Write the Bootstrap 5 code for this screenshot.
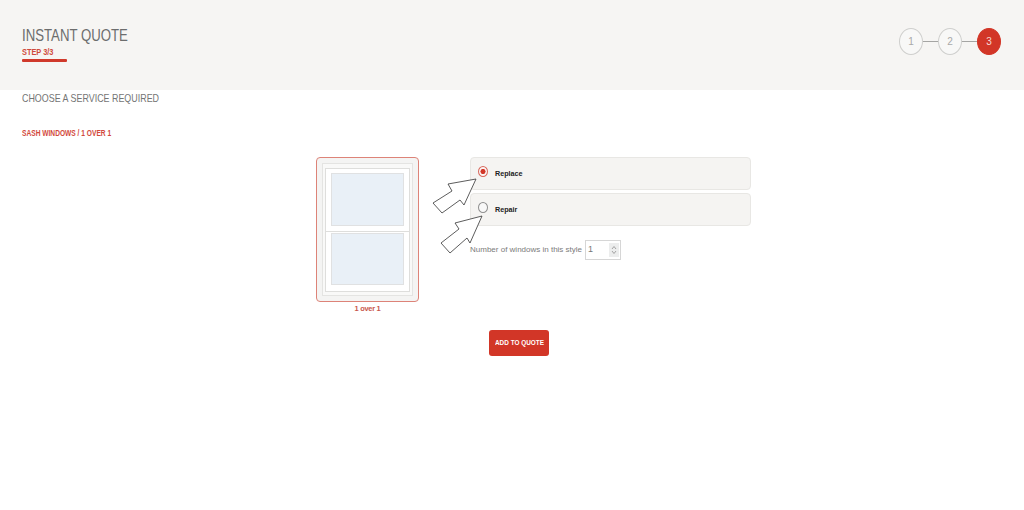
<!DOCTYPE html>
<html lang="en">
<head>
<meta charset="utf-8">
<title>Instant Quote</title>
<link href="https://cdn.jsdelivr.net/npm/bootstrap@5.3.0/dist/css/bootstrap.min.css" rel="stylesheet">
<style>
body{font-family:"Liberation Sans",Arial,sans-serif;background:#fff;color:#6d6e6e;overflow:hidden}
.quote-head{height:90px;background:#f6f5f3;padding:25px 23px 0 22px}
.squeeze{transform-origin:left center;white-space:nowrap}
.quote-title{font-size:16.5px;line-height:20px;margin:0;font-weight:400;color:#6c6d6d;transform:scaleX(.8)}
.quote-step{font-size:9px;line-height:10px;margin-top:2px;font-weight:700;color:#cf4a3c;transform:scaleX(.82)}
.quote-rule{width:45px;height:3px;background:#d0392b;margin-top:2px;border-radius:1px}
.stepper{margin-top:3px}
.step-dot{width:24px;height:27px;border-radius:50%;border:1px solid #cfcfcd;background:#f8f8f7;color:#a9a9a9;font-size:10px}
.step-dot.is-on{background:#d23627;border-color:#d23627;color:#f6d9d4}
.step-link{width:15px;height:1px;background:#a5a5a3}
.service-title{font-size:11.5px;line-height:14px;margin:1px 0 0 22px;font-weight:400;color:#747575;transform:scaleX(.775)}
.crumb{font-size:8.5px;line-height:10px;margin:23px 0 0 22px;font-weight:700;color:#d2493b;transform:scaleX(.78)}
.picker{margin:19px 0 0 316px;position:relative}
.window-col{width:103px}
.window-card{height:145px;border:1px solid #dd8378;border-radius:4px;background:#f4f4f3;padding:5px}
.window-frame{height:133px;border:1px solid #e4e4e2;background:#f9f9f8;padding:4px 2px 3px}
.sash{background:#fff;border:1px solid #dededc;padding:4px 5px 5px;height:64px}
.sash-lower{border-top:0;height:60px;padding:1px 5px 6px}
.glass{height:100%;background:#e9f0f7;border:1px solid #e0e1e2}
.window-cap{font-size:7.5px;line-height:10px;margin-top:2px;font-weight:700;color:#c9584c;text-align:center;letter-spacing:-.3px}
.options-col{width:281px;margin-left:51px}
.opt-row{height:33px;background:#f5f4f2;border:1px solid #e8e7e4;border-radius:4px;margin-bottom:3px;padding:0 0 0 7px}
.opt-radio{width:10px;height:11px;margin:-5px 0 0;border:1px solid #8f8f8f;background:#f8f8f8;appearance:none;border-radius:50%;flex:none}
.opt-radio:checked{border-color:#d8695d;background:radial-gradient(circle,#d23627 0 2.3px,#fbf3f2 2.8px)}
.opt-label{font-size:7.2px;font-weight:700;color:#222;margin:1px 0 0 7px}
.count-row{margin-top:14px;font-size:8px;color:#7b7b7b}
.count-box{width:36px;height:20px;border:1px solid #d6d6d6;margin-left:3px;padding:0 1px 0 2px;color:#777;background:#fff}
.count-num{font-size:9px}
.spin{width:10px;height:14px;background:#eceded;color:#999}
.add-btn{margin:16px 0 0 489px;width:60px;height:26px;padding:0;background:#d23627;border:0;border-radius:3px;color:#fff;display:block}
.add-text{display:block;font-size:8px;font-weight:700;white-space:nowrap;transform:scaleX(.8)}
.arrows{position:absolute;left:109px;top:13px;width:60px;height:90px;pointer-events:none}
</style>
</head>
<body>
<header class="quote-head d-flex justify-content-between align-items-start">
  <div>
    <h1 class="quote-title squeeze">INSTANT QUOTE</h1>
    <div class="quote-step squeeze">STEP 3/3</div>
    <div class="quote-rule"></div>
  </div>
  <div class="stepper d-flex align-items-center">
    <div class="step-dot d-flex align-items-center justify-content-center">1</div>
    <div class="step-link"></div>
    <div class="step-dot d-flex align-items-center justify-content-center">2</div>
    <div class="step-link"></div>
    <div class="step-dot is-on d-flex align-items-center justify-content-center">3</div>
  </div>
</header>
<main>
  <h2 class="service-title squeeze">CHOOSE A SERVICE REQUIRED</h2>
  <div class="crumb squeeze">SASH WINDOWS / 1 OVER 1</div>
  <div class="picker d-flex align-items-start">
    <div class="window-col">
      <div class="window-card">
        <div class="window-frame">
          <div class="sash"><div class="glass"></div></div>
          <div class="sash sash-lower"><div class="glass"></div></div>
        </div>
      </div>
      <div class="window-cap">1 over 1</div>
    </div>
    <div class="options-col">
      <div class="opt-row d-flex align-items-center">
        <input class="opt-radio" type="radio" name="svc" id="svc1" checked>
        <label class="opt-label" for="svc1">Replace</label>
      </div>
      <div class="opt-row d-flex align-items-center">
        <input class="opt-radio" type="radio" name="svc" id="svc2">
        <label class="opt-label" for="svc2">Repair</label>
      </div>
      <div class="count-row d-flex align-items-center">
        <span>Number of windows in this style</span>
        <div class="count-box d-flex align-items-center justify-content-between">
          <span class="count-num">1</span>
          <svg class="spin" viewBox="0 0 10 14" aria-hidden="true"><path d="M3 6 5 3.500 7 6M3 8 5 10.500 7 8" fill="none" stroke="#8f8f8f" stroke-width=".8"/></svg>
        </div>
      </div>
    </div>
    <svg class="arrows" viewBox="425 170 60 90" aria-hidden="true">
      <path d="M476 179 448 184 452 191 433 203 442 213 460 200 464 205Z" fill="#fff" stroke="#333" stroke-width=".8" stroke-linejoin="round"/>
      <path d="M482 216 455 223 459 229 441 243 450 253 467 238 470 243Z" fill="#fff" stroke="#333" stroke-width=".8" stroke-linejoin="round"/>
    </svg>
  </div>
  <button class="add-btn" type="button"><span class="add-text">ADD TO QUOTE</span></button>
</main>
<script src="https://cdn.jsdelivr.net/npm/bootstrap@5.3.0/dist/js/bootstrap.bundle.min.js"></script>
</body>
</html>
